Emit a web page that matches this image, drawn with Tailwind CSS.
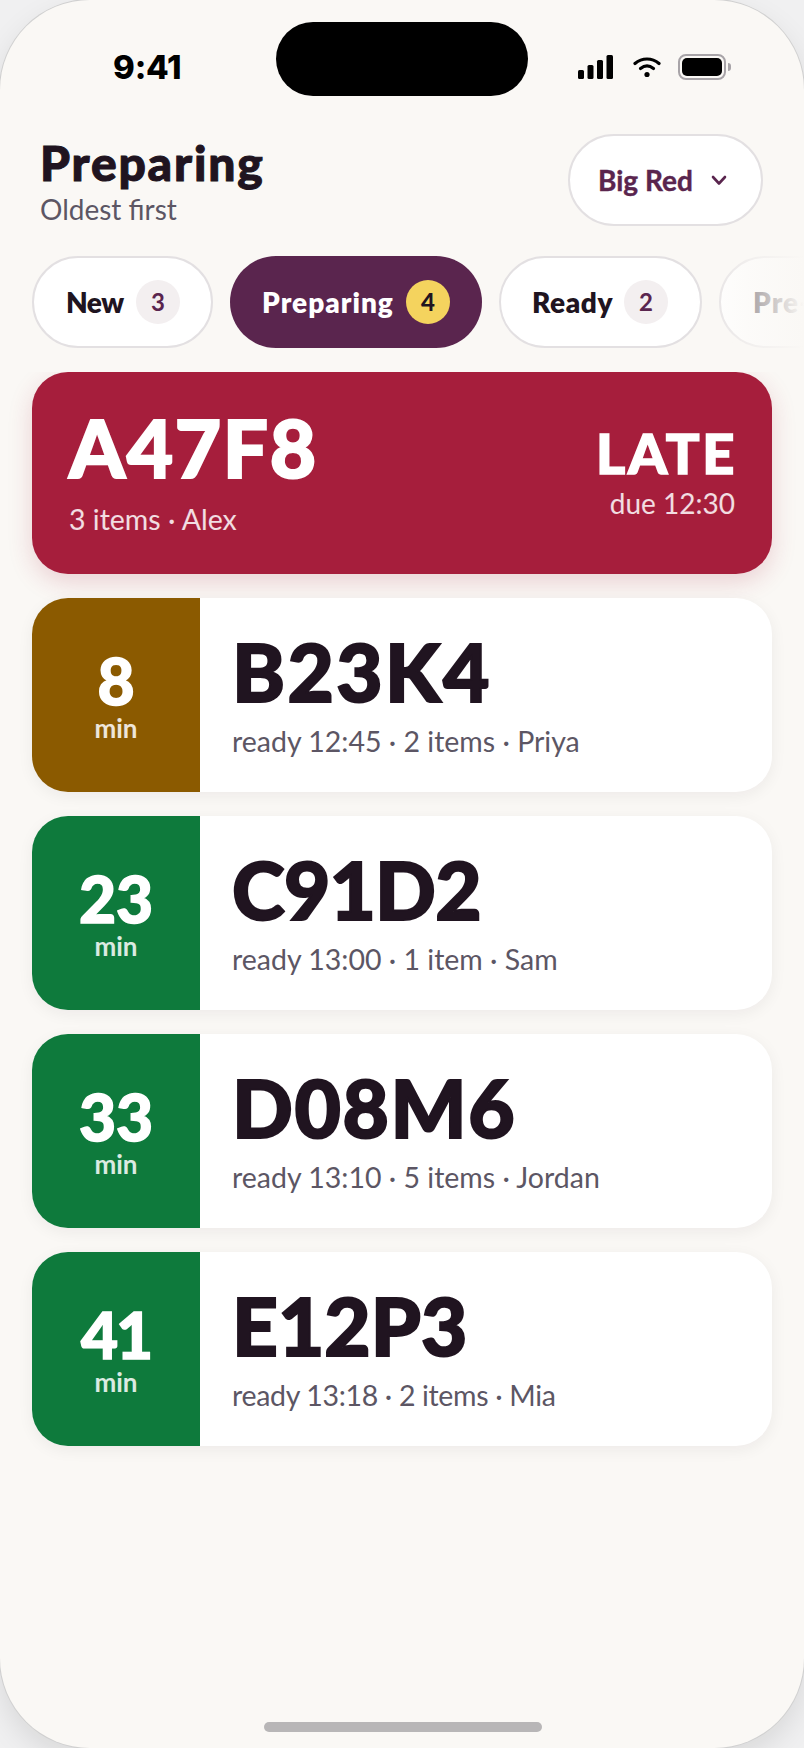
<!DOCTYPE html>
<html lang="en">
<head>
<meta charset="utf-8">
<script src="https://cdn.jsdelivr.net/npm/@tailwindcss/browser@4"></script>
<title>Preparing</title>
</head>
<body class="m-0 overflow-hidden bg-[#f0f0f1]">
<div class="relative flex h-[1748px] w-[804px] flex-col overflow-hidden rounded-[90px] bg-[#faf8f5] font-['Lato',sans-serif] shadow-[0_0_0_1px_#d0d0d0,0_12px_30px_rgba(0,0,0,0.1)]">

  <!-- status bar -->
  <div class="relative flex h-[134px] shrink-0 items-start justify-between">
    <span class="ml-[113px] mt-[45px] font-['Inter',sans-serif] text-[33px] leading-[44px] font-extrabold tracking-[-0.2px] text-black">9:41</span>
    <div class="absolute left-[276px] top-[22px] h-[74px] w-[252px] rounded-full bg-black"></div>
    <div class="mr-[73px] mt-[54px] flex items-center">
      <svg width="35" height="24" viewBox="0 0 35 24" class="block" fill="#000"><rect x="0" y="15" width="6" height="9" rx="1.5"/><rect x="9.5" y="10" width="6" height="14" rx="1.5"/><rect x="19" y="5" width="6" height="19" rx="1.5"/><rect x="28.5" y="0" width="6.5" height="24" rx="1.5"/></svg>
      <svg width="28" height="22" viewBox="0 0 28 22" class="ml-[20px] block" fill="none" stroke="#000" stroke-width="3.2" stroke-linecap="round"><path d="M2 7.5C9 1.5 19 1.5 26 7.5"/><path d="M7.5 12.5C11.5 9.3 16.5 9.3 20.5 12.5"/><circle cx="14" cy="18.5" r="2.6" fill="#000" stroke="none"/></svg>
      <div class="ml-[17px] flex items-center">
        <div class="h-[26px] w-[48px] rounded-[8px] border-2 border-[#a8a4a8] p-[2px]"><div class="h-full w-full rounded-[5px] bg-black"></div></div>
        <div class="ml-[2px] h-[8px] w-[3px] rounded-r-[3px] bg-[#a8a4a8]"></div>
      </div>
    </div>
  </div>

  <!-- header -->
  <div class="flex h-[92px] shrink-0 items-start justify-between pl-[40px] pr-[41px]">
    <div class="flex flex-col">
      <h1 class="m-0 mt-[1px] text-[48px] leading-[56px] font-black tracking-[1.8px] text-[#201420] [-webkit-text-stroke:1px_#201420]">Preparing</h1>
      <p class="m-0 mt-[3px] text-[28px] leading-[30px] font-normal text-[#5c5664]">Oldest first</p>
    </div>
    <div class="flex h-[92px] w-[195px] items-center gap-[18px] rounded-[46px] border-2 border-[#e3e0e2] bg-white pl-[28px]">
      <span class="text-[28px] leading-[32px] font-bold text-[#5a254e] [-webkit-text-stroke:0.4px_#5a254e]">Big Red</span>
      <svg width="16" height="11" viewBox="0 0 16 11" fill="none" stroke="#5a254e" stroke-width="2.6" stroke-linecap="round" stroke-linejoin="round"><path d="M2 2l6 6.5L14 2"/></svg>
    </div>
  </div>

  <!-- tabs -->
  <div class="relative mt-[30px] flex h-[92px] shrink-0 gap-[17px] overflow-hidden pl-[32px]">
    <div class="flex h-[92px] w-[181px] shrink-0 items-center justify-between rounded-[46px] border-2 border-[#e3e0e2] bg-white pl-[32px] pr-[31px]">
      <span class="text-[28px] font-extrabold tracking-[-0.5px] text-[#201420]">New</span>
      <span class="flex h-[44px] w-[44px] items-center justify-center rounded-full bg-[#f3eff0] text-[24px] font-bold text-[#5a254e]">3</span>
    </div>
    <div class="flex h-[92px] w-[252px] shrink-0 items-center justify-between rounded-[46px] bg-[#5a254e] pl-[32px] pr-[32px]">
      <span class="text-[28px] font-extrabold tracking-[1px] text-white">Preparing</span>
      <span class="flex h-[44px] w-[44px] items-center justify-center rounded-full bg-[#f4d35e] text-[24px] font-black text-[#201420]">4</span>
    </div>
    <div class="flex h-[92px] w-[203px] shrink-0 items-center justify-between rounded-[46px] border-2 border-[#e3e0e2] bg-white pl-[31px] pr-[32px]">
      <span class="text-[28px] font-extrabold tracking-[0.6px] text-[#201420]">Ready</span>
      <span class="flex h-[44px] w-[44px] items-center justify-center rounded-full bg-[#f3eff0] text-[24px] font-bold text-[#5a254e]">2</span>
    </div>
    <div class="flex h-[92px] w-[200px] shrink-0 items-center rounded-[46px] border-2 border-[#e3e0e2] bg-white pl-[32px]">
      <span class="text-[28px] font-extrabold tracking-[1px] text-[#201420]">Pre-orders</span>
    </div>
    <div class="absolute right-0 top-0 h-full w-[108px] bg-gradient-to-r from-[#faf8f500] via-[#faf8f5a0] via-50% to-[#faf8f5]"></div>
  </div>

  <!-- order list -->
  <div class="mt-[24px] flex flex-1 flex-col gap-[24px] overflow-hidden px-[32px] pb-[40px]">
    <div class="flex h-[202px] shrink-0 items-start justify-between rounded-[36px] bg-[#a61e3c] pl-[37px] pr-[37px] shadow-[0_8px_24px_rgba(165,31,62,0.18)]">
      <div class="flex flex-col">
        <span class="mt-[27px] text-[80px] leading-[96px] font-black tracking-[1.6px] text-white [-webkit-text-stroke:2px_#fff]">A47F8</span>
        <span class="mt-[8px] text-[28.5px] leading-[32px] text-white/85">3 items · Alex</span>
      </div>
      <div class="flex flex-col items-end">
        <span class="-mr-[2px] mt-[47px] text-[56px] leading-[68px] font-black tracking-[2.6px] text-white [-webkit-text-stroke:1.5px_#fff]">LATE</span>
        <span class="mt-0 text-[28px] leading-[32px] text-white/85">due 12:30</span>
      </div>
    </div>

    <div class="flex h-[194px] shrink-0 overflow-hidden rounded-[36px] bg-white shadow-[0_4px_16px_rgba(32,20,32,0.06)]">
      <div class="flex w-[168px] shrink-0 flex-col items-center justify-center bg-[#8b5a00]">
        <span class="text-[64px] leading-[66px] font-black text-white [-webkit-text-stroke:1.5px_#fff]">8</span>
        <span class="text-[26px] leading-[28px] font-bold text-white/85">min</span>
      </div>
      <div class="flex flex-col pl-[32px]">
        <span class="mt-[25px] text-[80px] leading-[96px] font-black tracking-[2.4px] text-[#201420] [-webkit-text-stroke:2px_#201420]">B23K4</span>
        <span class="mt-[6px] text-[28.5px] leading-[32px] text-[#5c5664]">ready 12:45 · 2 items · Priya</span>
      </div>
    </div>

    <div class="flex h-[194px] shrink-0 overflow-hidden rounded-[36px] bg-white shadow-[0_4px_16px_rgba(32,20,32,0.06)]">
      <div class="flex w-[168px] shrink-0 flex-col items-center justify-center bg-[#0e7a3c]">
        <span class="text-[64px] leading-[66px] font-black text-white [-webkit-text-stroke:1.5px_#fff]">23</span>
        <span class="text-[26px] leading-[28px] font-bold text-white/85">min</span>
      </div>
      <div class="flex flex-col pl-[32px]">
        <span class="mt-[25px] text-[80px] leading-[96px] font-black tracking-[-0.8px] text-[#201420] [-webkit-text-stroke:2px_#201420]">C91D2</span>
        <span class="mt-[6px] text-[28.5px] leading-[32px] text-[#5c5664]">ready 13:00 · 1 item · Sam</span>
      </div>
    </div>

    <div class="flex h-[194px] shrink-0 overflow-hidden rounded-[36px] bg-white shadow-[0_4px_16px_rgba(32,20,32,0.06)]">
      <div class="flex w-[168px] shrink-0 flex-col items-center justify-center bg-[#0e7a3c]">
        <span class="text-[64px] leading-[66px] font-black text-white [-webkit-text-stroke:1.5px_#fff]">33</span>
        <span class="text-[26px] leading-[28px] font-bold text-white/85">min</span>
      </div>
      <div class="flex flex-col pl-[32px]">
        <span class="mt-[25px] text-[80px] leading-[96px] font-black tracking-[1.6px] text-[#201420] [-webkit-text-stroke:2px_#201420]">D08M6</span>
        <span class="mt-[6px] text-[28.5px] leading-[32px] text-[#5c5664]">ready 13:10 · 5 items · Jordan</span>
      </div>
    </div>

    <div class="flex h-[194px] shrink-0 overflow-hidden rounded-[36px] bg-white shadow-[0_4px_16px_rgba(32,20,32,0.06)]">
      <div class="flex w-[168px] shrink-0 flex-col items-center justify-center bg-[#0e7a3c]">
        <span class="text-[64px] leading-[66px] font-black tracking-[-2px] text-white [-webkit-text-stroke:1.5px_#fff]">41</span>
        <span class="text-[26px] leading-[28px] font-bold text-white/85">min</span>
      </div>
      <div class="flex flex-col pl-[32px]">
        <span class="mt-[25px] text-[80px] leading-[96px] font-black text-[#201420] [-webkit-text-stroke:2px_#201420]">E12P3</span>
        <span class="mt-[6px] text-[28.5px] leading-[32px] tracking-[-0.33px] text-[#5c5664]">ready 13:18 · 2 items · Mia</span>
      </div>
    </div>
  </div>

  <!-- home indicator -->
  <div class="absolute bottom-[16px] left-[264px] h-[10px] w-[278px] rounded-[5px] bg-[#b8b6b7]"></div>
</div>
</body>
</html>
